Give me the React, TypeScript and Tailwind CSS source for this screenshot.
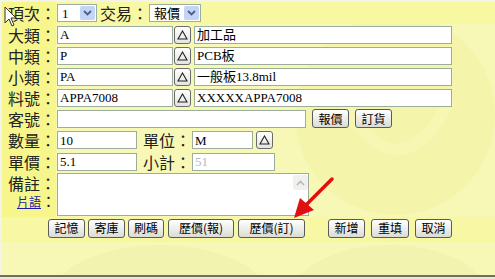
import React from 'react'

const cjk = '"Noto Sans CJK TC", "Noto Sans CJK SC", sans-serif'
const serif = '"Liberation Serif", "Noto Sans CJK TC", serif'

function Label({ text }: { text: string }) {
  return (
    <div className="flex h-full w-[54px] shrink-0 items-center justify-end whitespace-nowrap bg-[#f6f68c] text-[16px] leading-none text-[#222]">
      {text}
    </div>
  )
}

function Field({ w, value, gray }: { w: string; value?: string; gray?: boolean }) {
  return (
    <div
      className={`flex h-[18px] shrink-0 items-center border border-[#9cad9c] bg-white pl-[2px] text-[13px] leading-none ${w} ${gray ? 'text-[#b8b8b8]' : 'text-black'}`}
      style={{ fontFamily: serif }}
    >
      {value}
    </div>
  )
}

function UpBtn() {
  return (
    <div className="flex h-[18px] w-[17px] shrink-0 items-center justify-center rounded-[3px] border border-[#6b6b6b] bg-gradient-to-b from-white to-[#e4e4e0]">
      <svg width="11" height="10" viewBox="0 0 11 10">
        <path d="M5.5 1 L10 9 L1 9 Z" fill="none" stroke="#222" strokeWidth="1.1" />
      </svg>
    </div>
  )
}

function Btn({ text, w }: { text: string; w: string }) {
  return (
    <div
      className={`flex h-[19px] shrink-0 items-center justify-center whitespace-nowrap rounded-[3px] border border-[#5a5a5a] bg-gradient-to-b from-white to-[#dcdcd6] text-[12px] leading-none text-black ${w}`}
    >
      {text}
    </div>
  )
}

function Select({ w, value }: { w: string; value: string }) {
  return (
    <div className={`flex h-[18px] shrink-0 items-center border border-[#9cad9c] bg-white ${w}`}>
      <span className="flex-1 pl-[4px] text-[13px] leading-none" style={{ fontFamily: serif }}>
        {value}
      </span>
      <div className="mr-[1px] flex h-[14px] w-[15px] items-center justify-center rounded-[2px] bg-[#c4d4f4]">
        <svg width="9" height="6" viewBox="0 0 9 6">
          <path d="M1 1 L4.5 4.5 L8 1" fill="none" stroke="#4a5f8a" strokeWidth="1.8" />
        </svg>
      </div>
    </div>
  )
}

export default function App() {
  return (
    <div
      className="relative h-[279px] w-[495px] overflow-hidden bg-[#f8f8b6]"
      style={{ fontFamily: cjk }}
    >
      {/* watermark */}
      <svg className="absolute left-0 top-0" width="495" height="279" viewBox="0 0 495 279">
        <circle cx="395" cy="115" r="100" fill="#f4f4ab" />
        <path d="M340 95 Q365 145 395 150 Q425 150 450 100" fill="none" stroke="#f7f7b3" strokeWidth="12" />
        <ellipse cx="160" cy="300" rx="110" ry="55" fill="#f3f3b0" />
        <ellipse cx="390" cy="300" rx="100" ry="55" fill="#f3f3b0" />
      </svg>

      <div className="relative flex h-[275px] flex-col border-l-[2px] border-t-[2px] border-[#f4f4e6]">
        <div className="flex h-[22px] items-center gap-[1px] bg-[#f8f8a2]">
          <Label text="項次：" />
          <Select w="w-[40px]" value="1" />
          <span className="ml-[2px] whitespace-nowrap text-[16px] leading-none text-[#222]">交易：</span>
          <Select w="w-[52px]" value="報價" />
        </div>

        {[
          ['大類：', 'A', '加工品'],
          ['中類：', 'P', 'PCB板'],
          ['小類：', 'PA', '一般板13.8mil'],
          ['料號：', 'APPA7008', 'XXXXXAPPA7008'],
        ].map(([l, a, b]) => (
          <div key={l} className="flex h-[21px] items-center gap-[1px]">
            <Label text={l} />
            <Field w="w-[116px]" value={a} />
            <UpBtn />
            <div className="w-[1px]" />
            <Field w="w-[258px]" value={b} />
          </div>
        ))}

        <div className="flex h-[21px] items-center gap-[1px]">
          <Label text="客號：" />
          <Field w="w-[249px]" />
          <div className="ml-[5px] flex gap-[6px]">
            <Btn text="報價" w="w-[37px]" />
            <Btn text="訂貨" w="w-[37px]" />
          </div>
        </div>

        <div className="flex h-[22px] items-center gap-[1px]">
          <Label text="數量：" />
          <Field w="w-[80px]" value="10" />
          <span className="ml-[5px] w-[48px] shrink-0 whitespace-nowrap text-[16px] leading-none text-[#222]">單位：</span>
          <Field w="w-[61px]" value="M" />
          <div className="w-[1px]" />
          <UpBtn />
        </div>

        <div className="flex h-[21px] items-center gap-[1px]">
          <Label text="單價：" />
          <Field w="w-[80px]" value="5.1" />
          <span className="ml-[5px] w-[48px] shrink-0 whitespace-nowrap text-[16px] leading-none text-[#222]">小計：</span>
          <Field w="w-[83px]" value="51" gray />
        </div>

        <div className="flex h-[45px] items-start gap-[1px]">
          <div className="flex h-full w-[54px] shrink-0 flex-col items-end bg-[#f6f68c] pt-[3px] text-[16px] leading-none text-[#222]">
            <span className="h-[18px] whitespace-nowrap">備註：</span>
            <span className="flex h-[15px] items-end whitespace-nowrap">
              <span className="text-[12px] leading-none text-[#1a1ab0] underline">片語</span>
              <span className="text-[15px] leading-none">：</span>
            </span>
          </div>
          <div className="mt-[1px] flex h-[43px] w-[252px] border border-[#9cad9c] bg-white">
            <div className="flex-1" />
            <div className="flex w-[16px] flex-col items-center pt-[1px]">
              <div className="flex h-[15px] w-[15px] items-center justify-center rounded-[2px] bg-[#f0f0ee]">
                <svg width="9" height="6" viewBox="0 0 9 6">
                  <path d="M1 5 L4.5 1.5 L8 5" fill="none" stroke="#b8b8b8" strokeWidth="1.6" />
                </svg>
              </div>
            </div>
          </div>
        </div>

        <div className="flex h-[22px] items-center bg-[#f8f8a4] pl-[46px]">
          <div className="flex gap-[3px]">
            <Btn text="記憶" w="w-[37px]" />
            <Btn text="寄庫" w="w-[37px]" />
            <Btn text="刷碼" w="w-[36px]" />
          </div>
          <div className="ml-[4px] flex gap-[4px]">
            <Btn text="歷價(報)" w="w-[66px]" />
            <Btn text="歷價(訂)" w="w-[67px]" />
          </div>
          <div className="ml-[23px] flex gap-[6px]">
            <Btn text="新增" w="w-[37px]" />
            <Btn text="重填" w="w-[38px]" />
            <Btn text="取消" w="w-[37px]" />
          </div>
        </div>
        <div className="h-[3px] bg-[#f8f89a]" />
      </div>

      <div className="relative h-[2px] bg-[#6e6e62]" />
      <div className="relative h-[2px] bg-[#e8e8d8]" />

      {/* red arrow */}
      <svg className="absolute left-[288px] top-[176px]" width="50" height="46" viewBox="0 0 50 46">
        <path d="M44 3 L17 30" stroke="#e01010" strokeWidth="3.5" strokeLinecap="round" />
        <path d="M6 42 L12 22 L26 34 Z" fill="#e01010" />
      </svg>

      {/* mouse cursor */}
      <svg className="absolute left-[4px] top-[6px]" width="14" height="22" viewBox="0 0 14 22">
        <path d="M1 1 L1 17 L5 13 L8 20 L10 19 L7 12 L12 12 Z" fill="#fff" stroke="#333" strokeWidth="1" />
      </svg>
    </div>
  )
}
